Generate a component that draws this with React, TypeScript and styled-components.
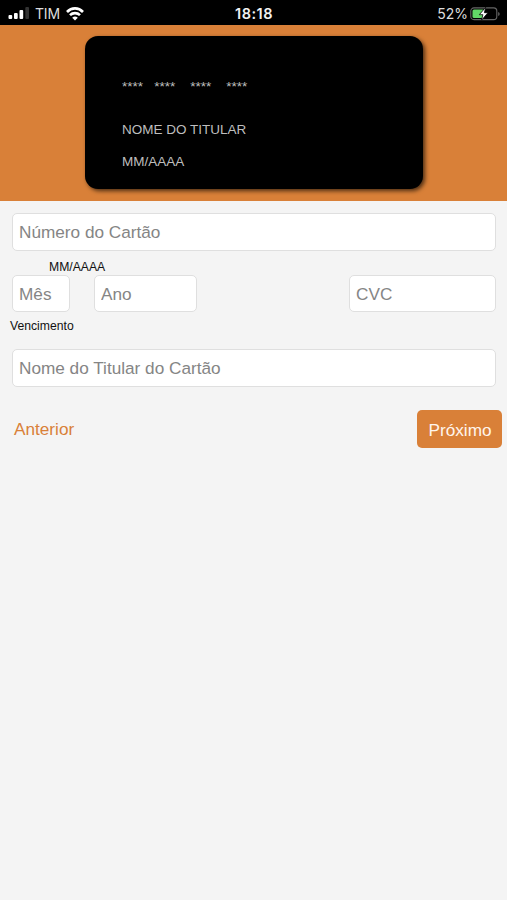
import React from 'react';
import styled, { createGlobalStyle } from 'styled-components';

const orange = '#d98038';

const GlobalStyle = createGlobalStyle`
  * { box-sizing: border-box; }
  body {
    margin: 0;
    background: #f4f4f4;
    font-family: "Liberation Sans", Arial, sans-serif;
  }
`;

const Screen = styled.div`
  display: flex;
  flex-direction: column;
  width: 100%;
  min-height: 900px;
  background: #f4f4f4;
`;

const StatusBar = styled.header`
  display: grid;
  grid-template-columns: 1fr auto 1fr;
  align-items: center;
  height: 25px;
  padding: 2px 7px 0 8px;
  background: #000;
  color: #dedede;
  font-family: Inter, "Liberation Sans", sans-serif;
  font-size: 14px;
  line-height: 22px;
`;

const StatusGroup = styled.div<{ $end?: boolean }>`
  display: flex;
  align-items: center;
  justify-content: ${(p) => (p.$end ? 'flex-end' : 'flex-start')};
  gap: ${(p) => (p.$end ? '2px' : '6px')};
  letter-spacing: ${(p) => (p.$end ? '0' : '-0.2px')};

  svg { flex: none; }
`;

const Clock = styled.time`
  color: #f2f2f2;
  font-weight: 600;
  font-size: 14.5px;
  letter-spacing: 0.5px;
`;

const CardArea = styled.section`
  display: flex;
  justify-content: center;
  height: 176px;
  padding: 11px 0 0 1px;
  background: ${orange};
`;

const CreditCard = styled.div`
  display: flex;
  flex-direction: column;
  width: 338px;
  height: 153px;
  padding: 43px 37px 0;
  border-radius: 13px;
  background: #000;
  box-shadow: 2px 2px 4px rgba(0, 0, 0, 0.65);
  color: #bebebe;
  font-size: 13.5px;
`;

const CardLine = styled.div<{ $height: number }>`
  height: ${(p) => p.$height}px;
  line-height: 16px;
  white-space: pre;
`;

const Form = styled.form`
  display: flex;
  flex-direction: column;
  padding: 12px 5px 0 10px;
`;

const Field = styled.input<{ $width?: number }>`
  display: block;
  width: ${(p) => (p.$width ? `${p.$width}px` : 'auto')};
  height: 37px;
  margin: 0;
  padding: 1px 6px 0;
  border: 1px solid #dfdfdf;
  border-radius: 5px;
  background: #fff;
  color: #333;
  font: 17.2px "Liberation Sans", Arial, sans-serif;
  outline: none;

  &::placeholder { color: #858585; opacity: 1; }
`;

const WideField = styled(Field)`
  height: 38px;
  margin: 0 6px 0 2px;
`;

const Hint = styled.div`
  height: 24px;
  padding: 9px 0 0 39px;
  color: #111;
  font-size: 12.2px;
  line-height: 14px;
`;

const FieldRow = styled.div`
  display: flex;
  padding: 0 6px 0 2px;
  gap: 24px;
`;

const SecurityField = styled(Field)`
  margin-left: auto;
`;

const Label = styled.label`
  height: 37px;
  padding-top: 7px;
  color: #111;
  font-size: 12.2px;
  line-height: 14px;
`;

const Actions = styled.nav`
  display: flex;
  align-items: center;
  justify-content: space-between;
  margin-top: 23px;
`;

const Button = styled.button<{ $primary?: boolean }>`
  width: ${(p) => (p.$primary ? '85px' : 'auto')};
  height: 38px;
  padding: ${(p) => (p.$primary ? '2px 0 0 1px' : '0 4px')};
  border: 0;
  border-radius: 5px;
  background: ${(p) => (p.$primary ? orange : 'transparent')};
  color: ${(p) => (p.$primary ? '#fff5ec' : orange)};
  font: 17.2px "Liberation Sans", Arial, sans-serif;
`;

const SignalIcon = () => (
  <svg width="21" height="13" viewBox="0 0 21 13" fill="#fff">
    <rect x="0.5" y="8" width="3.7" height="4" rx="1" />
    <rect x="6" y="6" width="3.7" height="6" rx="1" />
    <rect x="11.5" y="3" width="3.7" height="9" rx="1" />
    <rect x="17.3" y="0" width="3.7" height="12" rx="1" fill="#333" />
  </svg>
);

const WifiIcon = () => (
  <svg width="18" height="14" viewBox="0 0 18 14" fill="none" stroke="#fff" strokeWidth="2.6">
    <path d="M1 5C5.5 0.2 12.5 0.2 17 5" />
    <path d="M4 8.2C6.8 5.4 11.2 5.4 14 8.2" />
    <path d="M6.2 10.7Q9 8.3 11.8 10.7L9 13.6Z" fill="#fff" stroke="none" />
  </svg>
);

const BatteryIcon = () => (
  <svg width="30" height="14" viewBox="0 0 30 14">
    <rect x="0.8" y="0.9" width="26" height="11.7" rx="3.2" fill="none" stroke="#666" strokeWidth="1.1" />
    <path d="M28.2 5V9Q29.7 8.5 29.7 7T28.2 5Z" fill="#666" />
    <rect x="2.5" y="2.6" width="11.5" height="8.3" rx="1.5" fill="#62d767" />
    <path d="M15.7 0.3L9.3 7.7H12.9L11.5 13.2L18 5.7H14.4Z" fill="#fff" stroke="#000" strokeWidth="0.8" />
  </svg>
);

export default function App() {
  return (
    <Screen>
      <GlobalStyle />
      <StatusBar>
        <StatusGroup>
          <SignalIcon />
          <span>TIM</span>
          <WifiIcon />
        </StatusGroup>
        <Clock>18:18</Clock>
        <StatusGroup $end>
          <span>52%</span>
          <BatteryIcon />
        </StatusGroup>
      </StatusBar>
      <CardArea>
        <CreditCard>
          <CardLine $height={43}>{'****   ****    ****    ****'}</CardLine>
          <CardLine $height={32}>NOME DO TITULAR</CardLine>
          <CardLine $height={16}>MM/AAAA</CardLine>
        </CreditCard>
      </CardArea>
      <Form onSubmit={(event) => event.preventDefault()}>
        <WideField placeholder="Número do Cartão" />
        <Hint>MM/AAAA</Hint>
        <FieldRow>
          <Field id="month" $width={58} placeholder="Mês" />
          <Field $width={103} placeholder="Ano" />
          <SecurityField $width={147} placeholder="CVC" />
        </FieldRow>
        <Label htmlFor="month">Vencimento</Label>
        <WideField placeholder="Nome do Titular do Cartão" />
        <Actions>
          <Button type="button">Anterior</Button>
          <Button type="submit" $primary>Próximo</Button>
        </Actions>
      </Form>
    </Screen>
  );
}
